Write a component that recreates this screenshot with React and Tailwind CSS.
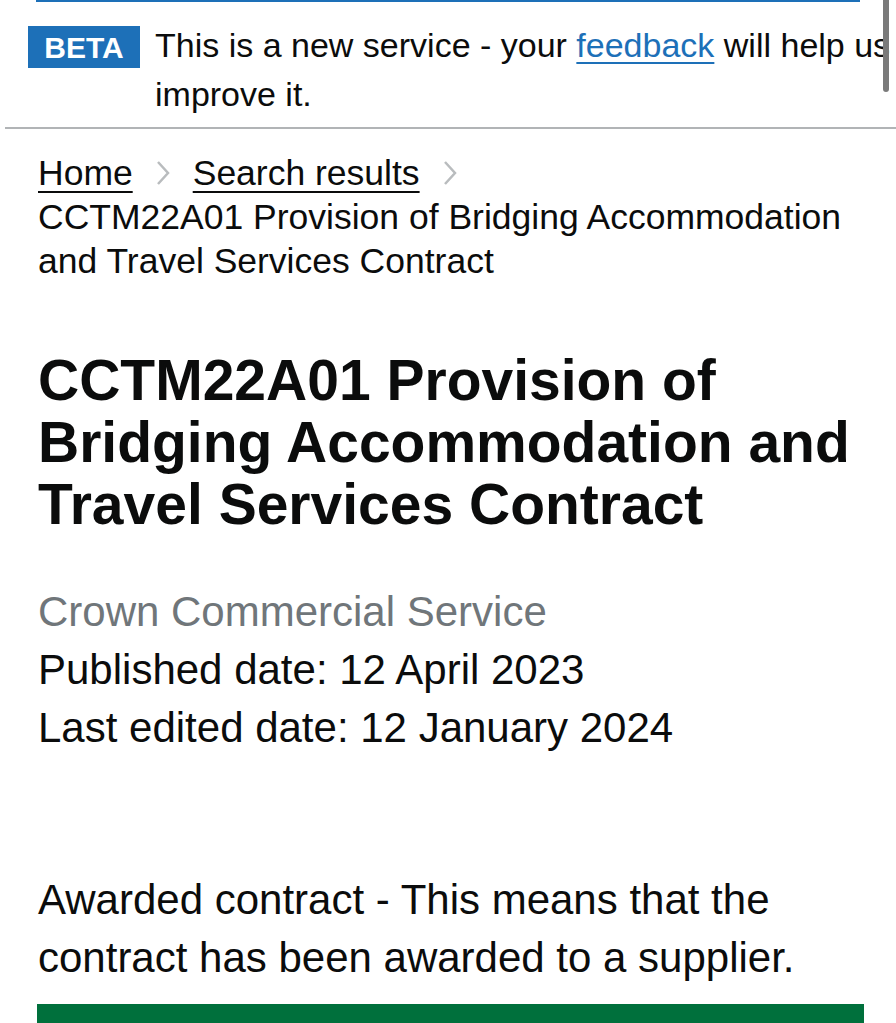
import React from "react";

const font = { fontFamily: '"Liberation Sans", Arial, sans-serif' };

function Chevron() {
  return (
    <span className="inline-flex items-center mx-[22px] h-[44px]">
      <svg width="16" height="26" viewBox="0 0 16 26" fill="none">
        <path d="M3 2 L13 13 L3 24" stroke="#b9bcbe" strokeWidth="2.5" />
      </svg>
    </span>
  );
}

function PhaseBanner() {
  return (
    <div className="relative">
      <div className="mx-[36px] h-[2px] bg-[#1d70b8]" />
      <div className="ml-[5px] pt-[19px] pb-[8px] border-b-2 border-[#b1b4b6]">
        <div className="flex items-start ml-[23px]">
          <div className="mt-[5px] w-[112px] h-[42px] bg-[#1d70b8] text-white font-bold text-[30px] flex items-center justify-center shrink-0">
            BETA
          </div>
          <p className="ml-[15px] w-[760px] shrink-0 text-[34px] leading-[49px] text-[#0b0c0c]">
            <span>This is a new service - your </span>
            <a href="#" className="text-[#1d70b8] underline decoration-2 underline-offset-[5px]">
              feedback
            </a>
            <span> will help us </span>
            <span>improve it.</span>
          </p>
        </div>
      </div>
      {/* scroll indicator */}
      <div className="absolute top-0 left-[883px] w-[6px] h-[92px] bg-[#7a7a7a] rounded-b-full" />
    </div>
  );
}

function Breadcrumbs() {
  return (
    <nav className="mt-[22px] text-[35.5px] leading-[44px] text-[#0b0c0c]">
      <ol className="flex flex-wrap items-center">
        <li className="flex items-center">
          <a href="#" className="underline decoration-2 underline-offset-[6px]">Home</a>
          <Chevron />
        </li>
        <li className="flex items-center">
          <a href="#" className="underline decoration-2 underline-offset-[6px]">Search results</a>
          <Chevron />
        </li>
        <li className="w-full">
          CCTM22A01 Provision of Bridging Accommodation and Travel Services Contract
        </li>
      </ol>
    </nav>
  );
}

export default function App() {
  return (
    <div className="bg-white min-h-[1023px] overflow-hidden text-[#0b0c0c]" style={font}>
      <PhaseBanner />
      <main className="ml-[38px] mr-[34px]">
        <Breadcrumbs />
        <h1 className="mt-[66px] text-[57px] leading-[62px] font-bold">
          CCTM22A01 Provision of Bridging Accommodation and Travel Services Contract
        </h1>
        <div className="mt-[48px] text-[42px] leading-[58px]">
          <p className="text-[#70767a]">Crown Commercial Service</p>
          <p>Published date: 12 April 2023</p>
          <p>Last edited date: 12 January 2024</p>
        </div>
        <p className="mt-[114px] text-[42px] leading-[58px]">
          Awarded contract - This means that the contract has been awarded to a supplier.
        </p>
        <div className="mt-[17px] ml-[-1px] mr-[-2px] h-[40px] bg-[#00703c]" />
      </main>
    </div>
  );
}
